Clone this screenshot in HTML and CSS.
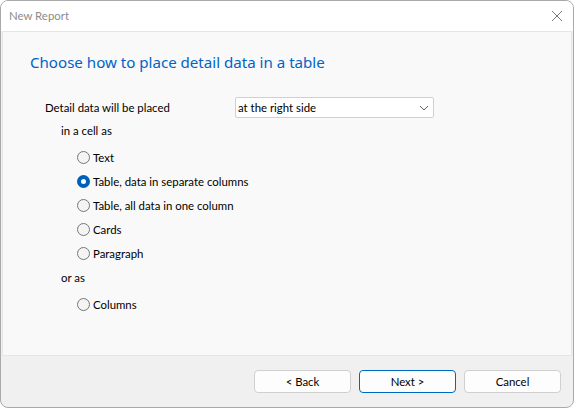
FILE: index.html
```html
<!DOCTYPE html>
<html>
<head>
<meta charset="utf-8">
<link rel="stylesheet" href="styles.css">
</head>
<body>
<div class="window">
  <div class="titlebar">
    <span class="title">New Report</span>
    <svg class="close" width="12" height="12" viewBox="0 0 12 12"><path d="M1 1L11 11M11 1L1 11" stroke="#7a7a7a" stroke-width="1" fill="none"/></svg>
  </div>
  <div class="panel">
    <h1 class="heading">Choose how to place detail data in a table</h1>
    <div class="placerow">
      <span class="label">Detail data will be placed</span>
      <div class="select">
        <span>at the right side</span>
        <svg width="10" height="6" viewBox="0 0 10 6"><path d="M1 1L5 5L9 1" stroke="#606060" stroke-width="1" fill="none"/></svg>
      </div>
    </div>
    <div class="group-label">in a cell as</div>
    <div class="radios">
      <div class="radio"><span class="dot"></span>Text</div>
      <div class="radio"><span class="dot on"></span>Table, data in separate columns</div>
      <div class="radio"><span class="dot"></span>Table, all data in one column</div>
      <div class="radio"><span class="dot"></span>Cards</div>
      <div class="radio"><span class="dot"></span>Paragraph</div>
    </div>
    <div class="group-label">or as</div>
    <div class="radios">
      <div class="radio"><span class="dot"></span>Columns</div>
    </div>
  </div>
  <div class="footer">
    <button class="btn">&lt; Back</button>
    <button class="btn primary">Next &gt;</button>
    <button class="btn">Cancel</button>
  </div>
</div>
</body>
</html>
```
FILE: styles.css
```css
html, body {
  margin: 0;
  padding: 0;
  background: #ffffff;
}
body {
  font-family: "Lato", "Liberation Sans", sans-serif;
  font-size: 11.4px;
  color: #000;
}
.window {
  width: 574px;
  height: 408px;
  box-sizing: border-box;
  border: 1px solid #a9a9a9;
  border-radius: 8px;
  overflow: hidden;
  display: flex;
  flex-direction: column;
  background: #f0f0f0;
}
.titlebar {
  height: 30px;
  background: #ffffff;
  display: flex;
  align-items: center;
  justify-content: space-between;
  padding: 0 10px 0 8px;
  flex: none;
}
.title {
  color: #8c8c8c;
  font-size: 11.4px;
  line-height: 30px;
}
.close { display: block; }
.panel {
  height: 325px;
  box-sizing: border-box;
  margin: 0 1px;
  border: 1px solid #e6e6e6;
  background: #f9f9f9;
  padding: 0 0 0 42px;
  flex: none;
}
.heading {
  margin: 17px 0 0 -15px;
  font-family: "Noto Sans", "Liberation Sans", sans-serif;
  font-weight: normal;
  font-size: 15.1px;
  line-height: 26px;
  color: #0063c7;
}
.placerow {
  display: flex;
  align-items: center;
  margin-top: 22px;
  height: 21px;
}
.label {
  width: 190px;
}
.select {
  width: 199px;
  height: 21px;
  box-sizing: border-box;
  background: #fff;
  border: 1px solid #d0d0d0;
  border-radius: 2px;
  display: flex;
  align-items: center;
  justify-content: space-between;
  padding: 0 4px 0 2px;
}
.select svg { display: block; }
.group-label {
  margin-left: 16px;
  height: 24px;
  line-height: 24px;
  margin-top: 1px;
}
.radios {
  margin-left: 32px;
  display: flex;
  flex-direction: column;
  padding-top: 2px;
}
.radio {
  height: 24px;
  display: flex;
  align-items: center;
  gap: 3px;
}
.dot {
  width: 13px;
  height: 13px;
  box-sizing: border-box;
  border-radius: 50%;
  border: 1px solid #777;
  background: #f4f4f4;
  flex: none;
}
.dot.on {
  border: 4px solid #005fb8;
  background: #fff;
}
.footer {
  flex: 1;
  display: flex;
  justify-content: flex-end;
  align-items: center;
  gap: 8px;
  padding: 0 12px 0 0;
}
.btn {
  width: 97px;
  height: 23px;
  box-sizing: border-box;
  background: #fdfdfd;
  border: 1px solid #d0d0d0;
  border-radius: 4px;
  font-family: "Lato", "Liberation Sans", sans-serif;
  font-size: 11.4px;
  color: #000;
  padding: 0;
}
.btn.primary {
  border-color: #0067c0;
}
```
